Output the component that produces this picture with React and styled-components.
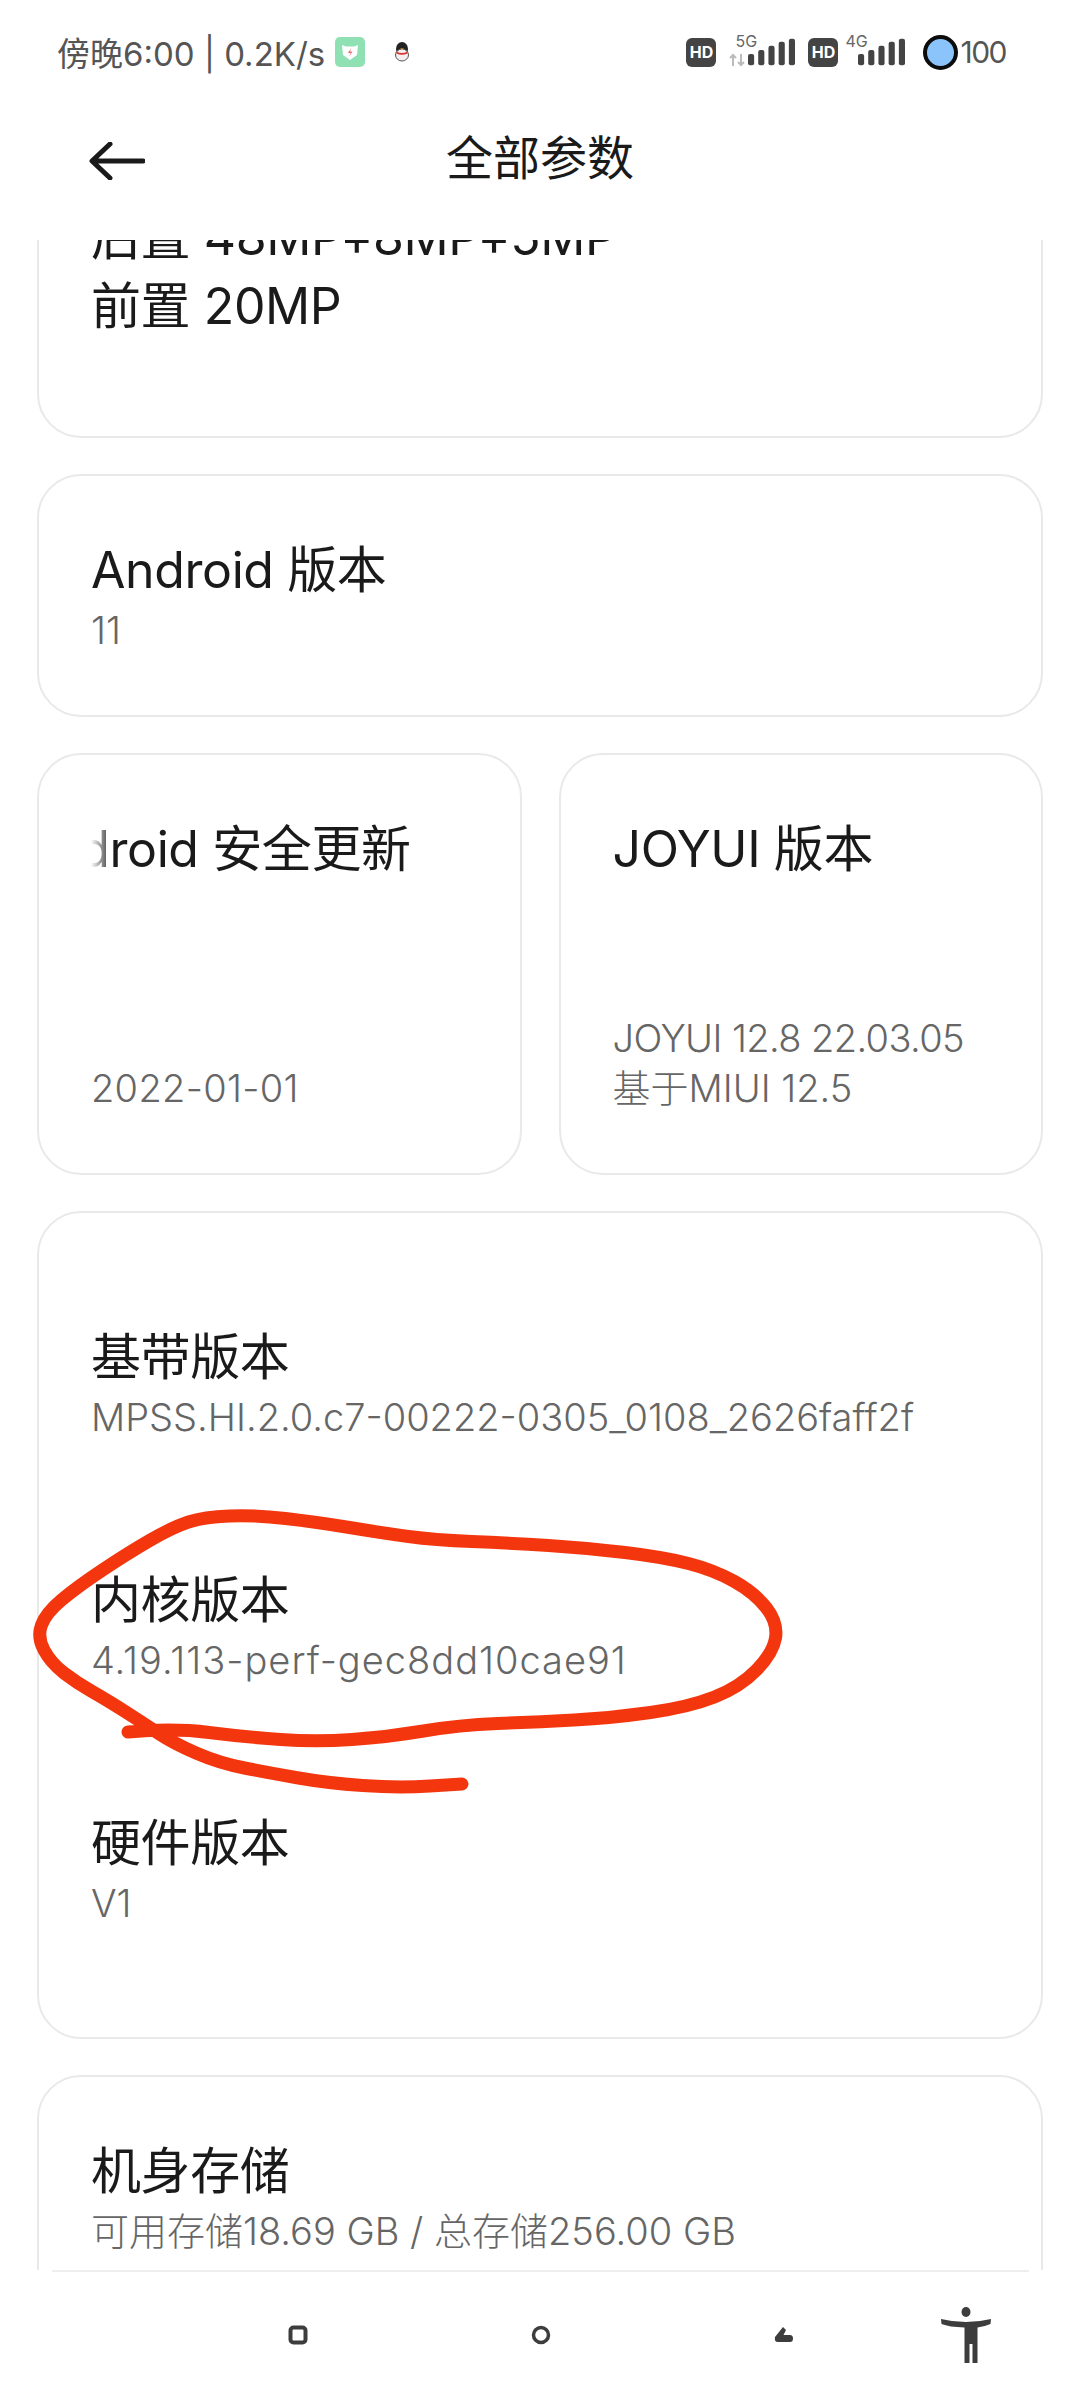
import React from 'react'
import styled, { createGlobalStyle } from 'styled-components'

const FONT = 'Inter, "Noto Sans CJK SC", "Noto Sans", sans-serif'

const GlobalStyle = createGlobalStyle`
  html, body {
    margin: 0;
    padding: 0;
    background: #fff;
  }
`

const STROKE_POINTS = [
  [128, 1732], [173, 1728], [245, 1737], [316, 1742], [388, 1737], [459, 1725],
  [536, 1722], [612, 1718], [689, 1707], [740, 1687], [773, 1653], [778, 1623],
  [755, 1593], [714, 1570], [663, 1557], [587, 1548], [510, 1543], [434, 1540],
  [383, 1533], [316, 1522], [255, 1515], [204, 1517], [173, 1527], [128, 1553],
  [77, 1587], [46, 1613], [37, 1637], [51, 1663], [77, 1683], [107, 1700],
  [143, 1723], [173, 1743], [219, 1763], [270, 1773], [327, 1783], [398, 1788],
  [462, 1784],
]

const smoothPath = (points) => {
  let d = `M${points[0][0]} ${points[0][1]}`
  for (let i = 1; i < points.length - 1; i++) {
    const [x, y] = points[i]
    const [nx, ny] = points[i + 1]
    d += ` Q${x} ${y} ${(x + nx) / 2} ${(y + ny) / 2}`
  }
  const last = points[points.length - 1]
  return `${d} L${last[0]} ${last[1]}`
}

const BARS = [
  [0, 15, 11],
  [10, 11, 15],
  [20, 7, 19],
  [30, 3, 23],
  [40, 0, 26],
]

const SignalBars = () => (
  <BarsSvg viewBox="0 0 46 26">
    {BARS.map(([x, y, h]) => (
      <rect key={x} x={x} y={y} width="6" height={h} rx="2" fill="#444" />
    ))}
  </BarsSvg>
)

const SimGroup = ({ label, arrows }) => (
  <SimWrap>
    <HdBadge>HD</HdBadge>
    <SignalWrap $arrows={arrows}>
      <NetLabel $arrows={arrows}>{label}</NetLabel>
      {arrows && (
        <ArrowsSvg viewBox="0 0 16 14">
          <path d="M4 13V2M1 5l3-3 3 3M12 1v11M9 9l3 3 3-3" fill="none" stroke="#bbb" strokeWidth="2" />
        </ArrowsSvg>
      )}
      <SignalBars />
    </SignalWrap>
  </SimWrap>
)

const SpecBlock = ({ title, value, spacing }) => (
  <div>
    <SpecTitle>{title}</SpecTitle>
    <SpecValue $spacing={spacing}>{value}</SpecValue>
  </div>
)

export default function App() {
  return (
    <Page>
      <GlobalStyle />
      <StatusBar>
        <StatusLeft>
          <span>傍晚6:00 | 0.2K/s</span>
          <AppIcon viewBox="0 0 30 30">
            <rect width="30" height="30" rx="5" fill="#8fe0b3" />
            <path d="M7 8l4 1.5h8L23 8l-1 10-7 5-7-5z" fill="#fff" />
            <path d="M16 11l-3 5h2.5l-1 3 3-4.5h-2.5z" fill="#ee6b78" />
          </AppIcon>
          <QqIcon viewBox="0 0 18 20">
            <ellipse cx="9" cy="7" rx="6" ry="7" fill="#222" />
            <ellipse cx="9" cy="13" rx="6.5" ry="6" fill="#f4eeee" stroke="#555" strokeWidth="1" />
            <path d="M3.5 9.5q5.500 3 11 0v2q-5.500 2.500-11 0z" fill="#d9332e" />
            <path d="M7 6.500l2 1.500 2-1.500z" fill="#f0b030" />
          </QqIcon>
        </StatusLeft>
        <StatusRight>
          <SimGroup label="5G" arrows />
          <SimGroup label="4G" />
          <BatteryDot />
          <BatteryText>100</BatteryText>
        </StatusRight>
      </StatusBar>

      <TitleBar>
        <BackIcon viewBox="0 0 56 38">
          <path d="M54 19H4M21 2L3 19l18 17" fill="none" stroke="#1a1a1a" strokeWidth="5" strokeLinecap="round" strokeLinejoin="round" />
        </BackIcon>
        <PageTitle>全部参数</PageTitle>
      </TitleBar>

      <ScrollArea>
        <ScrollContent>
          <Card $bottom={95}>
            <SpecTitle>后置 48MP+8MP+5MP</SpecTitle>
            <SpecTitle>前置 20MP</SpecTitle>
          </Card>

          <Card>
            <SpecBlock title="Android 版本" value="11" />
          </Card>

          <HalfRow>
            <HalfCard>
              <Marquee><MarqueeText>Android 安全更新</MarqueeText></Marquee>
              <SpecValue $spacing={0.3}>2022-01-01</SpecValue>
            </HalfCard>
            <HalfCard>
              <SpecTitle>JOYUI 版本</SpecTitle>
              <div>
                <SpecValue $spacing={-0.6}>JOYUI 12.8 22.03.05</SpecValue>
                <SpecValue>基于MIUI 12.5</SpecValue>
              </div>
            </HalfCard>
          </HalfRow>

          <VersionCard>
            <SpecBlock title="基带版本" value="MPSS.HI.2.0.c7-00222-0305_0108_2626faff2f" />
            <SpecBlock title="内核版本" value="4.19.113-perf-gec8dd10cae91" spacing={1} />
            <SpecBlock title="硬件版本" value="V1" />
          </VersionCard>

          <Card>
            <SpecBlock title="机身存储" value="可用存储18.69 GB / 总存储256.00 GB" />
          </Card>
        </ScrollContent>
      </ScrollArea>

      <NavBar>
        <NavSlot>
          <NavSvg viewBox="0 0 20 20" $size={20}>
            <rect x="2.500" y="2.500" width="15" height="15" rx="3" fill="none" stroke="#3d3d3d" strokeWidth="4" />
          </NavSvg>
        </NavSlot>
        <NavSlot>
          <NavSvg viewBox="0 0 20 20" $size={20}>
            <circle cx="10" cy="10" r="7.500" fill="none" stroke="#3d3d3d" strokeWidth="3.500" />
          </NavSvg>
        </NavSlot>
        <NavSlot>
          <NavSvg viewBox="0 0 20 16" $size={20}>
            <path d="M9 0L1 10q-1 5 3 5h12q3 0 3-3.500T16 8H9.500L12 3z" fill="#3d3d3d" />
          </NavSvg>
        </NavSlot>
        <NavSlot>
          <NavSvg viewBox="0 0 50 56" $size={50}>
            <ellipse cx="25" cy="5" rx="4.500" ry="5" fill="#3d3d3d" />
            <path d="M0 12q12 3 25 3t25-3l-.5 5q-7 3-13 3.500V56h-5V37h-3v19h-5V20.500Q8 20 .5 17z" fill="#3d3d3d" />
          </NavSvg>
        </NavSlot>
      </NavBar>

      <InkOverlay viewBox="0 0 1080 2400">
        <path d={smoothPath(STROKE_POINTS)} fill="none" stroke="#f4360f" strokeWidth="13" strokeLinecap="round" strokeLinejoin="round" />
      </InkOverlay>
    </Page>
  )
}

const Page = styled.div`
  position: relative;
  width: 1080px;
  height: 2400px;
  display: flex;
  flex-direction: column;
  overflow: hidden;
  background: #fff;
  font-family: ${FONT};
`

const StatusBar = styled.div`
  height: 104px;
  flex: none;
  display: flex;
  align-items: center;
  justify-content: space-between;
  padding: 0 74px 0 57px;
  color: #555;
  font-size: 33px;
`

const StatusLeft = styled.div`
  display: flex;
  align-items: center;
`

const AppIcon = styled.svg`
  width: 30px;
  height: 30px;
  margin-left: 10px;
`

const QqIcon = styled.svg`
  width: 18px;
  height: 20px;
  margin-left: 28px;
`

const StatusRight = styled.div`
  display: flex;
  align-items: center;
`

const SimWrap = styled.div`
  display: flex;
  align-items: center;
  margin-right: 13px;
  &:nth-child(2) {
    margin-right: 18px;
  }
`

const HdBadge = styled.span`
  width: 30px;
  height: 29px;
  border-radius: 6px;
  background: #444;
  color: #fff;
  font-size: 16px;
  font-weight: 700;
  line-height: 29px;
  text-align: center;
`

const SignalWrap = styled.div`
  position: relative;
  width: ${({ $arrows }) => ($arrows ? 66 : 47)}px;
  height: 30px;
  margin-left: ${({ $arrows }) => ($arrows ? 13 : 20)}px;
  display: flex;
  justify-content: flex-end;
  align-items: flex-end;
`

const NetLabel = styled.span`
  position: absolute;
  top: -4px;
  left: ${({ $arrows }) => ($arrows ? 6 : -13)}px;
  font-size: 16px;
  line-height: 16px;
  color: #666;
`

const ArrowsSvg = styled.svg`
  position: absolute;
  left: 0;
  bottom: 0;
  width: 16px;
  height: 14px;
`

const BarsSvg = styled.svg`
  width: 47px;
  height: 30px;
`

const BatteryDot = styled.span`
  width: 35px;
  height: 35px;
  box-sizing: border-box;
  border: 4px solid #0c0c0c;
  border-radius: 50%;
  background: #8ac4fb;
`

const BatteryText = styled.span`
  margin-left: 2px;
  font-size: 30px;
  letter-spacing: -1.5px;
  color: #555;
`

const TitleBar = styled.div`
  height: 136px;
  flex: none;
  box-sizing: border-box;
  padding: 0 89px 22px;
  display: grid;
  grid-template-columns: 1fr auto 1fr;
  align-items: center;
`

const BackIcon = styled.svg`
  width: 56px;
  height: 38px;
`

const PageTitle = styled.div`
  margin-bottom: 14px;
  font-size: 47px;
  color: #1a1a1a;
`

const ScrollArea = styled.div`
  flex: 1;
  min-height: 0;
  overflow: hidden;
`

const ScrollContent = styled.div`
  margin-top: -99px;
  padding: 0 37px;
  display: flex;
  flex-direction: column;
  gap: 36px;
`

const Card = styled.div`
  box-sizing: border-box;
  padding: 60px 52px ${({ $bottom }) => $bottom ?? 60}px;
  border: 2px solid #e9e9e9;
  border-radius: 44px;
`

const HalfRow = styled.div`
  display: grid;
  grid-template-columns: 1fr 1fr;
  gap: 37px;
`

const HalfCard = styled(Card)`
  height: 422px;
  display: flex;
  flex-direction: column;
  justify-content: space-between;
`

const VersionCard = styled(Card)`
  padding-top: 110px;
  padding-bottom: 109px;
  display: flex;
  flex-direction: column;
  gap: 124px;
`

const SpecTitle = styled.div`
  font-size: 50px;
  line-height: 69px;
  letter-spacing: -0.4px;
  color: #1a1a1a;
  white-space: nowrap;
`

const SpecValue = styled.div`
  font-size: 38px;
  font-weight: 300;
  line-height: 50px;
  letter-spacing: ${({ $spacing }) => $spacing ?? 0}px;
  color: #666;
  white-space: nowrap;
  &:first-of-type {
    margin-top: 10px;
  }
`

const Marquee = styled.div`
  overflow: hidden;
  white-space: nowrap;
  font-size: 50px;
  line-height: 69px;
  letter-spacing: -0.4px;
  color: #1a1a1a;
  mask-image: linear-gradient(90deg, transparent 0, #000 22px);
`

const MarqueeText = styled.span`
  display: inline-block;
  margin-left: -75px;
`

const NavBar = styled.div`
  position: relative;
  height: 130px;
  flex: none;
  box-sizing: border-box;
  padding-left: 176px;
  background: #fff;
  display: grid;
  grid-template-columns: 243px 243px 243px 122px;
  align-items: center;
  &::before {
    content: '';
    position: absolute;
    top: 0;
    left: 52px;
    right: 51px;
    height: 2px;
    background: #eee;
  }
`

const NavSlot = styled.div`
  display: flex;
  justify-content: center;
`

const NavSvg = styled.svg`
  width: ${({ $size }) => $size}px;
`

const InkOverlay = styled.svg`
  position: absolute;
  inset: 0;
  width: 1080px;
  height: 2400px;
  pointer-events: none;
`
